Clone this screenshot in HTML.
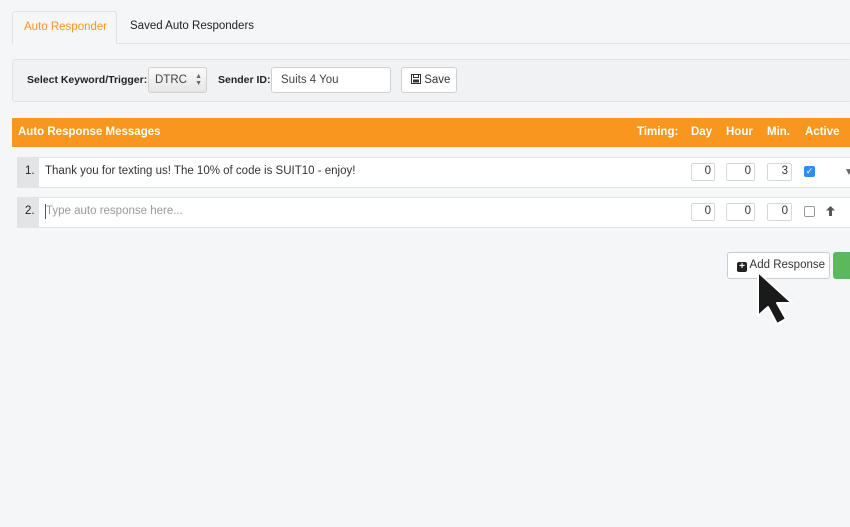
<!DOCTYPE html>
<html><head><style>
*{box-sizing:border-box;margin:0;padding:0}
body{width:850px;height:527px;background:#f5f6f8;font-family:"Liberation Sans",sans-serif;font-size:11.5px;color:#222;position:relative;overflow:hidden}
.a{position:absolute}
.inp{position:absolute;background:#fff;border:1px solid #d8d8d8;border-radius:2px;font-size:11.5px;text-align:right;padding-right:3px;line-height:15px;color:#333}
</style></head><body>
<div class="a" style="left:12px;top:43px;width:838px;height:1px;background:#dfe1e4"></div>
<div class="a" style="left:12px;top:11px;width:105px;height:33px;background:#f5f6f8;border:1px solid #dfe1e4;border-bottom:none;border-radius:3px 3px 0 0;color:#f7971e;font-size:11.5px;padding:9px 0 0 11px">Auto Responder</div>
<div class="a" style="left:130px;top:20px;font-size:11.5px;color:#222">Saved Auto Responders</div>

<div class="a" style="left:12px;top:59px;width:840px;height:43px;background:#f1f2f4;border:1px solid #e2e3e5;border-radius:3px"></div>
<div class="a" style="left:27px;top:74px;font-weight:bold;font-size:10.5px">Select Keyword/Trigger:</div>
<div class="a" style="left:148px;top:67px;width:59px;height:26px;background:linear-gradient(#fafafa,#e6e6e6);border:1px solid #d0d0d0;border-radius:3px;padding:6px 0 0 6px;color:#444">DTRC<span style="position:absolute;right:4px;top:5px;font-size:7px;line-height:7px;color:#666">▲<br>▼</span></div>
<div class="a" style="left:218px;top:74px;font-weight:bold;font-size:10.5px">Sender ID:</div>
<div class="a" style="left:271px;top:67px;width:120px;height:26px;background:#fff;border:1px solid #d0d0d0;border-radius:3px;padding:6px 0 0 9px;color:#444">Suits 4 You</div>
<div class="a" style="left:401px;top:67px;width:56px;height:26px;background:#fff;border:1px solid #d0d0d0;border-radius:3px;padding:6px 0 0 9px;color:#333"><svg width="10" height="10" viewBox="0 0 10 10" style="vertical-align:-1px"><rect x="0.5" y="0.5" width="9" height="9" fill="none" stroke="#333"/><rect x="2.5" y="0.5" width="5" height="3" fill="none" stroke="#333"/><rect x="2" y="5.5" width="6" height="3" fill="#333"/></svg> Save</div>

<div class="a" style="left:12px;top:118px;width:838px;height:29px;background:#f7971e;color:#fff;font-weight:bold;font-size:11.5px">
<span class="a" style="left:6px;top:8px">Auto Response Messages</span>
<span class="a" style="left:625px;top:8px">Timing:</span>
<span class="a" style="left:679px;top:8px">Day</span>
<span class="a" style="left:714px;top:8px">Hour</span>
<span class="a" style="left:755px;top:8px">Min.</span>
<span class="a" style="left:793px;top:8px">Active</span>
</div>

<div class="a" style="left:17px;top:157px;width:840px;height:31px;background:#fff;border:1px solid #e2e3e5"></div>
<div class="a" style="left:18px;top:158px;width:21px;height:29px;background:#e3e4e6;padding:7px 0 0 7px">1.</div>
<div class="a" style="left:45px;top:165px;color:#333">Thank you for texting us! The 10% of code is SUIT10 - enjoy!</div>
<div class="inp" style="left:691px;top:163px;width:24px;height:18px">0</div>
<div class="inp" style="left:726px;top:163px;width:29px;height:18px">0</div>
<div class="inp" style="left:767px;top:163px;width:25px;height:18px">3</div>
<div class="a" style="left:804px;top:166px;width:11px;height:11px;background:#2f8cf0;border-radius:2px;color:#fff;font-size:9px;line-height:11px;text-align:center">✓</div>
<div class="a" style="left:846px;top:164px;color:#666">▾</div>

<div class="a" style="left:17px;top:197px;width:840px;height:31px;background:#fff;border:1px solid #e2e3e5"></div>
<div class="a" style="left:18px;top:198px;width:21px;height:29px;background:#e3e4e6;padding:7px 0 0 7px">2.</div>
<div class="a" style="left:45px;top:204px;width:1px;height:15px;background:#555"></div>
<div class="a" style="left:46px;top:205px;color:#999">Type auto response here...</div>
<div class="inp" style="left:691px;top:203px;width:24px;height:18px">0</div>
<div class="inp" style="left:726px;top:203px;width:29px;height:18px">0</div>
<div class="inp" style="left:767px;top:203px;width:25px;height:18px">0</div>
<div class="a" style="left:804px;top:206px;width:11px;height:11px;border:1px solid #999;border-radius:2px;background:#fff"></div>
<svg class="a" style="left:826px;top:206px" width="9" height="10" viewBox="0 0 9 10"><path d="M4.5 0 L9 4.5 L6 4.5 L6 10 L3 10 L3 4.5 L0 4.5 Z" fill="#555"/></svg>

<div class="a" style="left:727px;top:252px;width:103px;height:27px;background:#fff;border:1px solid #ccc;border-radius:3px;padding:6px 0 0 9px;color:#333;font-size:11.5px"><span style="display:inline-block;width:10px;height:10px;background:#222;border-radius:2px;color:#fff;font-size:10px;line-height:10px;text-align:center;font-weight:bold;vertical-align:-1px">+</span> Add Response</div>
<div class="a" style="left:833px;top:252px;width:30px;height:27px;background:#5cb85c;border-radius:3px"></div>

<svg class="a" style="left:752px;top:268px" width="50" height="60" viewBox="0 0 50 60">
<path d="M6 4 L6 48 L16 39 L25 56 L34 51 L25 35 L40 35 Z" fill="#1a1a1a" stroke="#fff" stroke-width="2" stroke-linejoin="round"/>
</svg>
</body></html>
